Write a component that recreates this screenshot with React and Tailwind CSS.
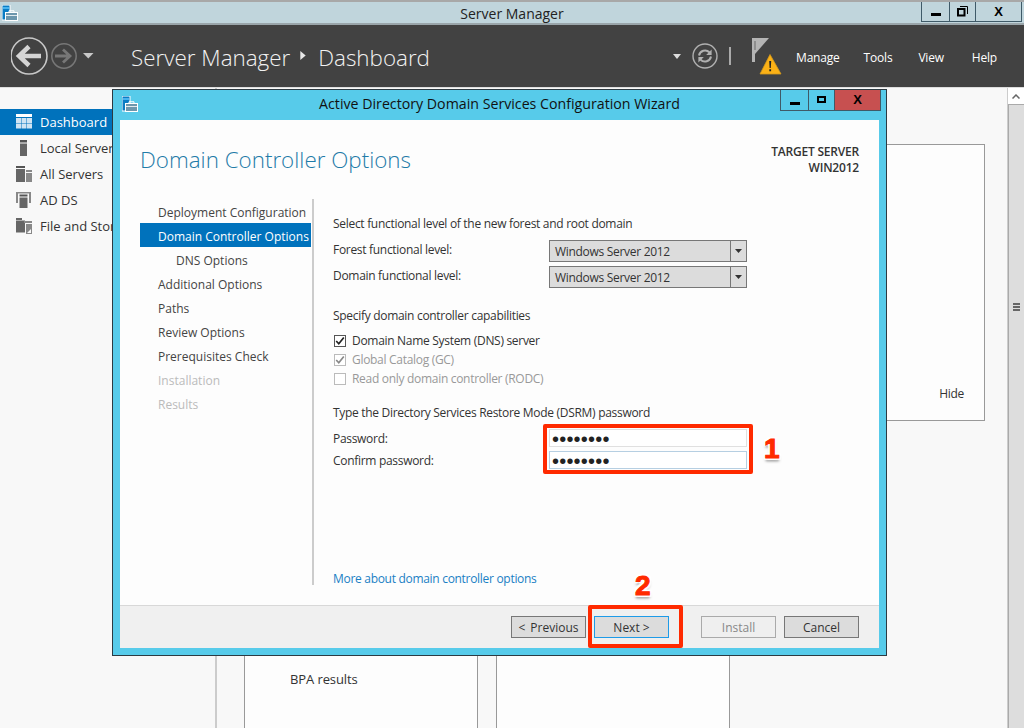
import React from "react";

const ff = "font-['Open_Sans','Noto_Sans',sans-serif]";

function SmIcon({ className = "" }) {
  return (
    <svg viewBox="0 0 16 16" className={className}>
      <rect x="0" y="0" width="8" height="15" fill="#0a7cc4" stroke="#fff" strokeWidth="1" />
      <rect x="1" y="2" width="6" height="2" fill="#48b4f0" />
      <rect x="3.5" y="7.5" width="12" height="8" fill="#6d97ad" stroke="#fff" strokeWidth="1" />
      <path d="M7 7.5V5.8h5v1.7" fill="none" stroke="#fff" strokeWidth="1" />
      <path d="M4 10.5h11" stroke="#fff" strokeWidth="0.8" />
    </svg>
  );
}

function BackIcons() {
  return (
    <svg width="90" height="40" viewBox="0 0 90 40" className="shrink-0">
      <circle cx="18" cy="20" r="18" fill="none" stroke="#c8c8c8" strokeWidth="1.6" />
      <path d="M30 20H10M18 10.5L8 20l10 9.5" fill="none" stroke="#d4d4d4" strokeWidth="4.5" />
      <circle cx="53" cy="20" r="12.2" fill="none" stroke="#777" strokeWidth="1.5" />
      <path d="M44 20h15M52 13.5l7 6.5-7 6.5" fill="none" stroke="#777" strokeWidth="2.8" />
      <path d="M72 17h10.5l-5.2 5.5z" fill="#c8c8c8" />
    </svg>
  );
}

function Refresh() {
  return (
    <svg width="26" height="26" viewBox="0 0 26 26" className="shrink-0">
      <circle cx="13" cy="13" r="12" fill="none" stroke="#b0b0b0" strokeWidth="1.4" />
      <path d="M7 12.5a6.2 6.2 0 0 1 10.4-3.2" fill="none" stroke="#b0b0b0" strokeWidth="2" />
      <path d="M19.6 6.5v5.4h-5.4z" fill="#b0b0b0" />
      <path d="M19 13.5a6.2 6.2 0 0 1-10.4 3.2" fill="none" stroke="#b0b0b0" strokeWidth="2" />
      <path d="M6.4 19.5v-5.4h5.4z" fill="#b0b0b0" />
    </svg>
  );
}

function FlagWarn() {
  return (
    <svg width="32" height="38" viewBox="0 0 32 38" className="shrink-0">
      <rect x="1" y="1" width="3" height="24" fill="#b4b4b4" />
      <path d="M4 1h14L4 17z" fill="#b4b4b4" />
      <rect x="3.6" y="4" width="0.8" height="9" fill="#555" />
      <path d="M19 17.5L30 37H9z" fill="#fbb116" stroke="#d69a1a" strokeWidth="0.8" />
      <path d="M18.2 24h2l-.4 7h-1.2zM18.3 32.3h1.8v2h-1.8z" fill="#222" />
    </svg>
  );
}

const navIcons = {
  dash: (
    <svg width="16" height="16" viewBox="0 0 16 16">
      <rect width="16" height="3" y="0" fill="#fff" />
      {[4, 9.5].map((y) =>
        [0, 5.5, 11].map((x) => <rect key={x + "-" + y} x={x} y={y} width="5" height="5" fill="#cfe4f3" />)
      )}
    </svg>
  ),
  local: (
    <svg width="16" height="16" viewBox="0 0 16 16">
      <rect x="4" y="0" width="7" height="2.5" fill="#555" />
      <rect x="4" y="3.5" width="7" height="12.5" fill="#666" />
    </svg>
  ),
  all: (
    <svg width="16" height="16" viewBox="0 0 16 16">
      <rect x="0" y="0" width="9" height="2" fill="#555" />
      <rect x="0" y="3" width="9" height="13" fill="#666" />
      <rect x="10" y="4" width="6" height="2" fill="#888" />
      <rect x="10" y="7" width="6" height="9" fill="#888" />
    </svg>
  ),
  ad: (
    <svg width="16" height="16" viewBox="0 0 16 16">
      <rect x="0" y="1" width="2" height="10" fill="#888" />
      <rect x="13" y="1" width="2" height="10" fill="#888" />
      <rect x="0" y="0" width="15" height="1.5" fill="#888" />
      <rect x="3.5" y="2.5" width="8" height="2" fill="#555" />
      <rect x="3.5" y="5.5" width="8" height="10.5" fill="#666" />
    </svg>
  ),
  file: (
    <svg width="16" height="16" viewBox="0 0 16 16">
      <rect x="0" y="0" width="6" height="2" fill="#666" />
      <rect x="0" y="2.5" width="9" height="12" fill="#666" />
      <rect x="8" y="3" width="8" height="2" fill="#888" />
      <rect x="10" y="6" width="6" height="10" fill="#888" />
      <path d="M11 15l4-4v4z" fill="#f8f8f8" />
    </svg>
  ),
};

function SideItem({ icon, label, active }) {
  return (
    <div className={"flex h-[26px] items-center pl-4 " + (active ? "bg-[#0072bc] text-white" : "text-[#333]")}>
      <span className="mr-2 flex h-4 w-4 shrink-0">{icon}</span>
      <span className="whitespace-nowrap pt-[2px] text-[13px] tracking-[0px]">{label}</span>
    </div>
  );
}

function WinBtn({ children, className = "" }) {
  return <div className={"flex items-center justify-center border-r border-[#3f5a68] " + className}>{children}</div>;
}

function Combo({ value }) {
  return (
    <div className="flex h-[22px] w-[198px] shrink-0 items-center border border-[#777] bg-[#dcdcdc] text-[#333]">
      <span className="flex-1 pl-[5px] pt-[2px]">{value}</span>
      <span className="flex h-full w-[16px] items-center justify-center border-l border-[#777]">
        <svg width="7" height="4" viewBox="0 0 7 4"><path d="M0 0h7L3.5 4z" fill="#333" /></svg>
      </span>
    </div>
  );
}

function Check({ checked, disabled, label }) {
  return (
    <div className={"flex h-[19px] items-center " + (disabled ? "text-[#999]" : "text-[#333]")}>
      <span className={"ml-px mr-[6px] flex h-[12px] w-[12px] items-center justify-center border bg-white " + (disabled ? "border-[#bbb]" : "border-[#555]")}>
        {checked && (
          <svg width="10" height="10" viewBox="0 0 10 10">
            <path d="M1.2 5l2.6 2.8L8.8 1.5" fill="none" stroke={disabled ? "#888" : "#222"} strokeWidth="1.7" />
          </svg>
        )}
      </span>
      {label}
    </div>
  );
}

function Pwd({ label, focus }) {
  return (
    <div className="flex h-[18px] items-center text-[#333]">
      <span className="w-[216px] pt-[1px]">{label}</span>
      <span className={"flex h-full w-[198px] items-center border bg-white pl-[2px] pt-[1px] font-['Liberation_Sans',sans-serif] text-[20px] leading-none tracking-[0.2px] text-[#222] " + (focus ? "border-[#b6cfe2]" : "border-[#e0e0e0]")}>
        ••••••••
      </span>
    </div>
  );
}

function Btn({ children, variant }) {
  const cls =
    variant === "focus"
      ? "border-[#1e9be8] bg-[#dcdcdc] text-[#333]"
      : variant === "off"
      ? "border-[#aaa] bg-[#efefef] text-[#888]"
      : "border-[#777] bg-[#dcdcdc] text-[#333]";
  return <div className={"flex h-[22px] w-[75px] items-center justify-center border pt-[2px] " + cls}>{children}</div>;
}

const nav = [
  ["Deployment Configuration", ""],
  ["Domain Controller Options", "sel"],
  ["DNS Options", "sub"],
  ["Additional Options", ""],
  ["Paths", ""],
  ["Review Options", ""],
  ["Prerequisites Check", ""],
  ["Installation", "off"],
  ["Results", "off"],
];

const redNum =
  "font-['Liberation_Sans',sans-serif] text-[28px] font-bold leading-[30px] text-[#ff2a00] [-webkit-text-stroke:1px_#ff2a00] [text-shadow:0_0_2px_#fff,2px_2px_1px_#fff,-2px_-2px_1px_#fff,2px_-2px_1px_#fff,-2px_2px_1px_#fff,0_3px_3px_#777]";

export default function App() {
  return (
    <div className={"relative flex h-[728px] w-[1024px] flex-col overflow-hidden bg-[#f8f8f8] tracking-[-0.3px] " + ff}>
      {/* main title bar */}
      <div className="relative flex h-[25px] shrink-0 items-center justify-center border-t-2 border-b-2 border-t-[#a8a8a8] border-b-[#9aa5aa] bg-[#c0d5dc] pt-[2px] text-[14px] tracking-[0px] text-[#222]">
        <SmIcon className="absolute left-[2px] top-[3px] h-[16px] w-[16px]" />
        Server Manager
        <div className="absolute right-[2px] top-0 flex h-[20px] border-b border-l border-[#3f5a68] text-black">
          <WinBtn className="w-[28px]"><span className="mt-[6px] h-[3px] w-[10px] bg-black" /></WinBtn>
          <WinBtn className="w-[26px]">
            <svg width="11" height="11" viewBox="0 0 11 11"><path d="M3 0.5h7.5V8" fill="none" stroke="#000" /><rect x="1" y="3" width="6.5" height="6.5" fill="none" stroke="#000" strokeWidth="2" /></svg>
          </WinBtn>
          <WinBtn className="w-[46px] font-['Liberation_Sans',sans-serif] text-[13px] font-bold">X</WinBtn>
        </div>
      </div>

      {/* header */}
      <div className="flex h-[62px] shrink-0 items-center bg-[#424242] pl-[11px] text-white">
        <BackIcons />
        <span className="ml-[30px] pt-[4px] text-[22.4px] font-light tracking-[0px] text-[#f2f2f2]">Server Manager</span>
        <svg width="6" height="9" viewBox="0 0 6 10" className="ml-[10px] mr-[12px] mb-[2px]"><path d="M0 0l6 5-6 5z" fill="#e8e8e8" /></svg>
        <span className="pt-[4px] text-[22.4px] font-light tracking-[0px] text-[#f2f2f2]">Dashboard</span>
        <div className="ml-auto flex items-center text-[12px] tracking-[-0.2px]">
          <svg width="8" height="5" viewBox="0 0 8 5" className="mr-[11px]"><path d="M0 0h8L4 5z" fill="#ddd" /></svg>
          <Refresh />
          <span className="ml-[11px] mr-[20px] h-[18px] w-[2px] bg-[#aaa]" />
          <FlagWarn />
          <span className="ml-[13px] pt-[4px]">Manage</span>
          <span className="ml-[24px] pt-[4px]">Tools</span>
          <span className="ml-[26px] pt-[4px]">View</span>
          <span className="ml-[28px] mr-[27px] pt-[4px]">Help</span>
        </div>
      </div>

      {/* body */}
      <div className="flex min-h-0 flex-1 border-t border-[#ddd]">
        <div className="w-[217px] shrink-0 border-r-2 border-[#ccc] pt-[21px]">
          <SideItem icon={navIcons.dash} label="Dashboard" active />
          <SideItem icon={navIcons.local} label="Local Server" />
          <SideItem icon={navIcons.all} label="All Servers" />
          <SideItem icon={navIcons.ad} label="AD DS" />
          <SideItem icon={navIcons.file} label="File and Storage Services" />
        </div>
        <div className="min-w-0 flex-1 pl-[27px] pr-[22px] pt-[56px]">
          <div className="flex h-[277px] items-end justify-end border border-[#999] bg-[#fdfdfd] pb-[17px] pr-[20px] text-[12px] text-[#333]">Hide</div>
          <div className="mt-[19px] flex h-[400px] gap-[18px] text-[13px] tracking-[-0.1px] text-[#333]">
            <div className="w-[234px] border border-[#999] bg-[#fdfdfd] pl-[45px] pt-[229px]">BPA results</div>
            <div className="w-[234px] border border-[#999] bg-[#fdfdfd]" />
          </div>
        </div>
        <div className="flex w-[17px] shrink-0 flex-col border-l border-[#ccc]">
          <div className="flex h-[16px] items-center justify-center bg-white">
            <svg width="8" height="5" viewBox="0 0 8 5"><path d="M0.5 4.5L4 1l3.5 3.5" fill="none" stroke="#666" strokeWidth="1.5" /></svg>
          </div>
          <div className="flex flex-1 flex-col items-center border-l border-t border-[#aaa] bg-[#ddd] pt-[198px]">
            <span className="h-[2px] w-[7px] bg-[#666]" />
            <span className="mt-px h-[2px] w-[7px] bg-[#666]" />
            <span className="mt-px h-[2px] w-[7px] bg-[#666]" />
          </div>
        </div>
      </div>

      {/* wizard window */}
      <div className="absolute left-[112px] top-[89px] flex h-[567px] w-[775px] flex-col border border-[#2c3a42] bg-[#57cbea] text-[12px]">
        <div className="relative flex h-[30px] shrink-0 items-center justify-center pb-[2px] text-[14.2px] tracking-[0px] text-[#111]">
          <SmIcon className="absolute left-[9px] top-[6px] h-[16px] w-[16px]" />
          Active Directory Domain Services Configuration Wizard
          <div className="absolute right-[5px] top-0 flex h-[21px] border-b border-l border-[#3f5a68]">
            <WinBtn className="w-[28px]"><span className="mt-[7px] h-[3px] w-[10px] bg-black" /></WinBtn>
            <WinBtn className="w-[26px]"><span className="mb-[1px] h-[7px] w-[9px] border-2 border-black" /></WinBtn>
            <WinBtn className="w-[46px] bg-[#c75050] font-['Liberation_Sans',sans-serif] text-[13px] font-bold text-black">X</WinBtn>
          </div>
        </div>
        <div className="mx-[7px] mb-[7px] flex min-h-0 flex-1 flex-col bg-[#fdfdfd]">
          <div className="flex h-[79px] shrink-0 items-start justify-between pl-[20px] pr-[20px]">
            <span className="mt-[21px] text-[22.4px] font-light leading-[38px] tracking-[0px] text-[#1f7ba8]">Domain Controller Options</span>
            <div className="mt-[24px] text-right font-semibold leading-[16px] tracking-[-0.2px] text-[#333]">TARGET SERVER<br />WIN2012</div>
          </div>
          <div className="flex h-[386px] shrink-0">
            <div className="ml-[20px] w-[172px] shrink-0 tracking-[0px]">
              {nav.map(([t, k]) => (
                <div
                  key={t}
                  className={
                    "flex h-6 items-center whitespace-nowrap pt-[4px] " +
                    (k === "sel" ? "mr-px bg-[#0072bc] pl-[18px] text-white" : k === "sub" ? "pl-[36px] text-[#444]" : k === "off" ? "pl-[18px] text-[#bbb]" : "pl-[18px] text-[#444]")
                  }
                >
                  {t}
                </div>
              ))}
            </div>
            <div className="flex flex-1 flex-col border-l-2 border-[#ccc] pl-[19px] pt-[12px] text-[#333]">
              <div className="flex h-6 items-center pt-[1px]">Select functional level of the new forest and root domain</div>
              <div className="mt-[5px] flex">
                <span className="w-[216px] leading-[19px]">Forest functional level:</span>
                <Combo value="Windows Server 2012" />
              </div>
              <div className="mt-1 flex">
                <span className="w-[216px] leading-[19px]">Domain functional level:</span>
                <Combo value="Windows Server 2012" />
              </div>
              <div className="mt-[15px] flex h-6 items-center pt-[1px]">Specify domain controller capabilities</div>
              <div className="mt-[4px]">
                <Check checked label="Domain Name System (DNS) server" />
                <Check checked disabled label="Global Catalog (GC)" />
                <Check disabled label="Read only domain controller (RODC)" />
              </div>
              <div className="mt-[12px] flex h-6 items-center pt-[1px]">Type the Directory Services Restore Mode (DSRM) password</div>
              <div className="mt-[5px]"><Pwd label="Password:" /></div>
              <div className="mt-[4px]"><Pwd label="Confirm password:" focus /></div>
              <div className="mt-auto leading-[13px] text-[#1a7fc4]">More about domain controller options</div>
            </div>
          </div>
          <div className="mt-[20px] flex flex-1 items-center justify-end border-t border-[#d8d8d8] bg-[#f0f0f0] pr-[20px] tracking-[0px]">
            <Btn><span className="mr-[5px]">&lt;</span>Previous</Btn>
            <div className="ml-2"><Btn variant="focus">Next &gt;</Btn></div>
            <div className="ml-8"><Btn variant="off">Install</Btn></div>
            <div className="ml-2"><Btn>Cancel</Btn></div>
          </div>
        </div>
      </div>

      {/* annotations */}
      <div className="absolute left-[543px] top-[424px] h-[50px] w-[210px] rounded-[2px] border-4 border-[#ff2a00]" />
      <div className={"absolute left-[764px] top-[434px] " + redNum}>1</div>
      <div className="absolute left-[588px] top-[605px] h-[43px] w-[95px] rounded-[2px] border-4 border-[#ff2a00]" />
      <div className={"absolute left-[635px] top-[571px] " + redNum}>2</div>
    </div>
  );
}
